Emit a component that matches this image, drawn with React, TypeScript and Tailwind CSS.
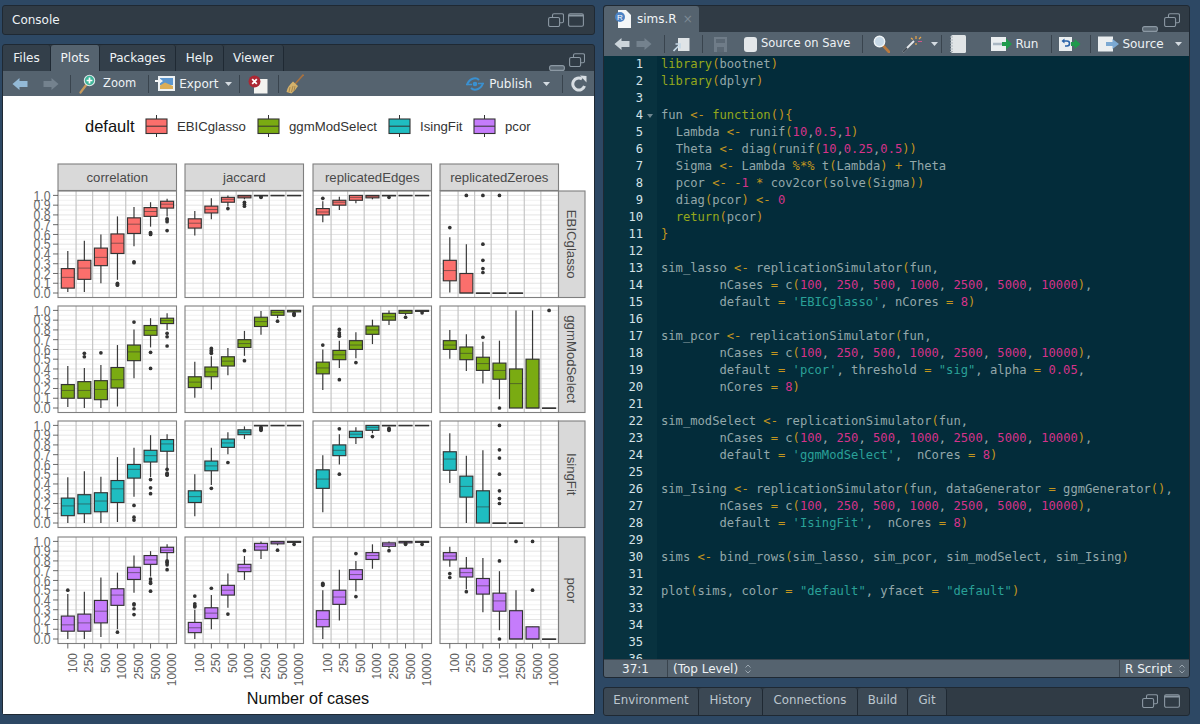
import React from "react";

const UI = "font-['DejaVu_Sans',sans-serif]";

// [lo, q1, med, q3, hi, ...outliers], null = nothing drawn
type Box = number[] | null;
const FLAT1: Box = [1, 1, 1, 1, 1];
const FLAT0: Box = [0, 0, 0, 0, 0];

const DATA: Box[][][] = [
  [
    [
      [0.01, 0.05, 0.16, 0.25, 0.43],
      [0.01, 0.14, 0.255, 0.335, 0.535],
      [0.1, 0.28, 0.365, 0.46, 0.6],
      [0.135, 0.405, 0.51, 0.605, 0.785, 0.1, 0.09, 0.08],
      [0.48, 0.61, 0.705, 0.77, 0.88, 0.32, 0.31],
      [0.68, 0.785, 0.835, 0.875, 0.93, 0.62, 0.61, 0.6],
      [0.785, 0.87, 0.91, 0.94, 0.965, 0.76, 0.75, 0.73, 0.64],
    ],
    [
      [0.59, 0.665, 0.715, 0.76, 0.84],
      [0.755, 0.82, 0.855, 0.89, 0.97],
      [0.885, 0.93, 0.96, 0.98, 1, 0.865],
      [0.96, 0.975, 0.99, 1, 1, 0.93, 0.91, 0.89],
      [0.995, 0.995, 1, 1, 1, 0.985, 0.98],
      FLAT1,
      FLAT1,
    ],
    [
      [0.725, 0.8, 0.83, 0.865, 0.94, 0.97],
      [0.85, 0.9, 0.93, 0.95, 0.985],
      [0.92, 0.95, 0.98, 1, 1],
      [0.96, 0.975, 0.99, 1, 1],
      [0.995, 0.995, 1, 1, 1, 0.98],
      FLAT1,
      FLAT1,
    ],
    [
      [0.005, 0.125, 0.23, 0.335, 0.57, 0.67],
      [0, 0, 0, 0.2, 0.5, 1],
      [0, 0, 0, 0, 0, 1, 0.5, 0.335, 0.25, 0.21],
      [0, 0, 0, 0, 0, 1],
      FLAT0,
      null,
      null,
    ],
  ],
  [
    [
      [0.01, 0.1, 0.18, 0.24, 0.43],
      [0, 0.1, 0.18, 0.27, 0.41, 0.525, 0.56],
      [0, 0.085, 0.19, 0.28, 0.44, 0.565],
      [0.015, 0.205, 0.29, 0.415, 0.645],
      [0.305, 0.485, 0.575, 0.645, 0.805, 0.88],
      [0.62, 0.745, 0.795, 0.845, 0.92, 0.57, 0.405],
      [0.8, 0.865, 0.895, 0.92, 0.97, 0.765, 0.73, 0.635],
    ],
    [
      [0.105, 0.21, 0.265, 0.32, 0.475],
      [0.19, 0.32, 0.37, 0.42, 0.53, 0.61, 0.59, 0.575, 0.56],
      [0.335, 0.43, 0.48, 0.525, 0.615],
      [0.535, 0.62, 0.66, 0.7, 0.79, 0.485],
      [0.75, 0.835, 0.885, 0.93, 0.995],
      [0.92, 0.95, 0.98, 1, 1, 0.89],
      [0.985, 0.985, 1, 1, 1, 0.97, 0.96, 0.95],
    ],
    [
      [0.185, 0.35, 0.41, 0.47, 0.6, 0.645],
      [0.41, 0.495, 0.545, 0.59, 0.69, 0.805, 0.77, 0.75, 0.735, 0.29],
      [0.51, 0.6, 0.645, 0.69, 0.775, 0.465],
      [0.655, 0.755, 0.8, 0.84, 0.905],
      [0.85, 0.9, 0.935, 0.97, 1],
      [0.95, 0.97, 0.99, 1, 1, 0.93],
      [0.99, 0.99, 1, 1, 1, 0.975],
    ],
    [
      [0.505, 0.6, 0.645, 0.69, 0.8],
      [0.38, 0.495, 0.56, 0.625, 0.755],
      [0.25, 0.385, 0.455, 0.52, 0.68, 0.725],
      [0.09, 0.295, 0.385, 0.46, 0.69, 0],
      [0, 0, 0.25, 0.4, 1],
      [0, 0, 0, 0.5, 1],
      [0, 0, 0, 0, 0, 1],
    ],
  ],
  [
    [
      [0, 0.075, 0.175, 0.255, 0.47],
      [0, 0.095, 0.195, 0.29, 0.53],
      [0, 0.115, 0.225, 0.31, 0.475],
      [0.01, 0.21, 0.35, 0.435, 0.675],
      [0.27, 0.46, 0.55, 0.6, 0.77, 0.18, 0.06, 0.03],
      [0.47, 0.625, 0.69, 0.745, 0.9, 0.445, 0.36, 0.3],
      [0.56, 0.735, 0.81, 0.855, 0.91, 0.55, 0.51, 0.5, 0.49],
    ],
    [
      [0.07, 0.21, 0.27, 0.33, 0.5],
      [0.39, 0.535, 0.585, 0.635, 0.77, 0.355],
      [0.705, 0.775, 0.82, 0.86, 0.93, 0.62],
      [0.86, 0.905, 0.93, 0.955, 0.99],
      [0.995, 0.995, 1, 1, 1, 0.98, 0.97, 0.96, 0.95],
      FLAT1,
      FLAT1,
    ],
    [
      [0.11, 0.355, 0.45, 0.545, 0.695],
      [0.6, 0.69, 0.745, 0.8, 0.91, 0.965, 0.5],
      [0.81, 0.875, 0.91, 0.94, 0.98],
      [0.92, 0.95, 0.98, 1, 1, 0.885],
      [0.995, 0.995, 1, 1, 1, 0.97, 0.96, 0.95],
      FLAT1,
      FLAT1,
    ],
    [
      [0.41, 0.54, 0.655, 0.73, 0.92],
      [0, 0.265, 0.375, 0.48, 0.69],
      [0, 0, 0.165, 0.33, 0.745],
      [0, 0, 0, 0, 0, 1, 0.75, 0.665, 0.5, 0.33, 0.25, 0.2],
      FLAT0,
      null,
      null,
    ],
  ],
  [
    [
      [0, 0.08, 0.145, 0.235, 0.46, 0.5],
      [0, 0.08, 0.165, 0.255, 0.485],
      [0.02, 0.165, 0.285, 0.395, 0.63],
      [0.1, 0.345, 0.45, 0.515, 0.68, 0.07],
      [0.475, 0.61, 0.68, 0.735, 0.855, 0.36, 0.35, 0.31, 0.25],
      [0.64, 0.765, 0.81, 0.855, 0.9, 0.615, 0.585, 0.57, 0.49],
      [0.815, 0.885, 0.91, 0.94, 0.97, 0.8, 0.79, 0.78, 0.76, 0.71],
    ],
    [
      [0, 0.065, 0.115, 0.17, 0.3, 0.44, 0.36, 0.34, 0.33],
      [0.1, 0.21, 0.265, 0.32, 0.45, 0.52],
      [0.32, 0.45, 0.5, 0.55, 0.67, 0.255],
      [0.605, 0.69, 0.73, 0.765, 0.85, 0.905],
      [0.82, 0.91, 0.945, 0.98, 1],
      [0.96, 0.975, 0.99, 1, 1, 0.91],
      [0.99, 0.99, 1, 1, 1, 0.97],
    ],
    [
      [0, 0.125, 0.2, 0.29, 0.5, 0.57, 0.56, 0.55],
      [0.19, 0.355, 0.43, 0.5, 0.71],
      [0.49, 0.61, 0.66, 0.71, 0.8, 0.875, 0.435],
      [0.72, 0.815, 0.855, 0.885, 0.97],
      [0.93, 0.95, 0.97, 0.985, 1, 0.905],
      [0.96, 0.985, 0.995, 1, 1, 0.98, 0.97],
      [0.99, 0.99, 1, 1, 1, 0.97],
    ],
    [
      [0.74, 0.81, 0.85, 0.885, 0.945, 0.67, 0.63],
      [0.51, 0.635, 0.68, 0.725, 0.84, 0.485],
      [0.275, 0.46, 0.545, 0.62, 0.83],
      [0.09, 0.285, 0.39, 0.47, 0.695, 0.8, 0],
      [0, 0, 0, 0.29, 0.5, 1],
      [0, 0, 0, 0.125, 0.125, 1, 0.5],
      FLAT0,
    ],
  ],
];

const COL_X = [58, 185, 313, 440];
const ROW_Y = [190, 305, 420, 536];
const PANEL_W = 118.5;
const PANEL_H = 106.5;
const FILLS = ["#fb6f6c", "#7aab12", "#1fbdc1", "#c57cfb"];
const COLS = ["correlation", "jaccard", "replicatedEdges", "replicatedZeroes"];
const ROWS = ["EBICglasso", "ggmModSelect", "IsingFit", "pcor"];
const CASES = ["100", "250", "500", "1000", "2500", "5000", "10000"];
const TICKS = [0, 0.1, 0.2, 0.3, 0.4, 0.5, 0.6, 0.7, 0.8, 0.9, 1];
const ARIAL = "'Liberation Sans', Arial, sans-serif";

function Panel({ r, c }: { r: number; c: number }) {
  const x0 = COL_X[c];
  const y0 = ROW_Y[r];
  const yOf = (v: number) => y0 + 102 - v * 97.6;
  const xOf = (i: number) => x0 + 9.8 + i * 16.55;
  const minor = Array.from({ length: 21 }, (_, i) => i * 0.05);
  return (
    <g>
      {minor.map((v, i) => (
        <line key={i} x1={x0} x2={x0 + PANEL_W} y1={yOf(v)} y2={yOf(v)} stroke={i % 2 ? "#f1f1f1" : "#e4e4e4"} strokeWidth={1} />
      ))}
      {[1, 2, 3, 4, 5, 6].map((i) => (
        <line key={i} x1={xOf(i) - 8.27} x2={xOf(i) - 8.27} y1={y0} y2={y0 + PANEL_H} stroke="#c6c6c6" strokeWidth={1.2} />
      ))}
      {DATA[r][c].map((b, i) => {
        if (!b) return null;
        const [lo, q1, med, q3, hi, ...out] = b;
        const x = xOf(i);
        return (
          <g key={i}>
            <line x1={x} x2={x} y1={yOf(hi)} y2={yOf(lo)} stroke="#3a3a3a" strokeWidth={1.2} />
            <rect x={x - 6.5} y={yOf(q3)} width={13} height={Math.max(yOf(q1) - yOf(q3), 0.4)} fill={FILLS[r]} stroke="#333" strokeWidth={1.15} />
            <line x1={x - 6.5} x2={x + 6.5} y1={yOf(med)} y2={yOf(med)} stroke="#333" strokeOpacity={0.55} strokeWidth={1} />
            {out.map((o, k) => (
              <circle key={k} cx={x} cy={yOf(o)} r={1.85} fill="#333" />
            ))}
          </g>
        );
      })}
      <rect x={x0} y={y0} width={PANEL_W} height={PANEL_H} fill="none" stroke="#7f7f7f" strokeWidth={1.1} />
      {c === 0 &&
        TICKS.map((v) => (
          <g key={v}>
            <line x1={x0 - 5} x2={x0} y1={yOf(v)} y2={yOf(v)} stroke="#444" strokeWidth={0.8} />
            <text
              transform={`translate(${x0 - 7.5} ${yOf(v) + 5.2}) scale(0.88 1)`}
              textAnchor="end"
              fontSize={14}
              fill="#6a6a6a"
              fontFamily={ARIAL}
            >
              {v.toFixed(1)}
            </text>
          </g>
        ))}
      {r === 3 &&
        CASES.map((t, i) => (
          <g key={t}>
            <line x1={xOf(i)} x2={xOf(i)} y1={y0 + PANEL_H} y2={y0 + PANEL_H + 5} stroke="#444" strokeWidth={0.8} />
            <text
              transform={`translate(${xOf(i) + 9} ${y0 + PANEL_H + 9.5}) rotate(-90) scale(0.92 1)`}
              textAnchor="end"
              fontSize={13}
              fill="#5f5f5f"
              fontFamily={ARIAL}
            >
              {t}
            </text>
          </g>
        ))}
    </g>
  );
}

function LegendKey({ x, fill, label, tx }: { x: number; fill: string; label: string; tx: number }) {
  return (
    <g>
      <line x1={x + 10.5} x2={x + 10.5} y1={114} y2={136} stroke="#333" strokeWidth={1} />
      <rect x={x} y={118} width={21} height={14.5} fill={fill} stroke="#333" strokeWidth={1.1} />
      <line x1={x} x2={x + 21} y1={125.2} y2={125.2} stroke="#333" strokeWidth={1} />
      <text x={tx} y={129.5} fontSize={13.2} fill="#333" fontFamily={ARIAL}>
        {label}
      </text>
    </g>
  );
}

function Chart() {
  return (
    <svg width={591} height={620} viewBox="3 95 591 620" className="block">
      <text x={85} y={131} fontSize={16.5} fill="#111" fontFamily={ARIAL}>
        default
      </text>
      <LegendKey x={146} fill={FILLS[0]} label="EBICglasso" tx={177} />
      <LegendKey x={258} fill={FILLS[1]} label="ggmModSelect" tx={289} />
      <LegendKey x={389} fill={FILLS[2]} label="IsingFit" tx={420} />
      <LegendKey x={474} fill={FILLS[3]} label="pcor" tx={505} />
      {COLS.map((name, c) => (
        <g key={name}>
          <rect x={COL_X[c]} y={163} width={PANEL_W} height={26.5} fill="#d9d9d9" stroke="#7f7f7f" strokeWidth={1.1} />
          <text x={COL_X[c] + PANEL_W / 2} y={180.5} textAnchor="middle" fontSize={13.2} fill="#4a4a4a" fontFamily={ARIAL}>
            {name}
          </text>
        </g>
      ))}
      {ROWS.map((name, r) => (
        <g key={name}>
          <rect x={558.5} y={ROW_Y[r]} width={26.5} height={PANEL_H} fill="#d9d9d9" stroke="#7f7f7f" strokeWidth={1.1} />
          <text
            transform={`translate(567 ${ROW_Y[r] + PANEL_H / 2}) rotate(90)`}
            textAnchor="middle"
            fontSize={13.2}
            fill="#4a4a4a"
            fontFamily={ARIAL}
          >
            {name}
          </text>
        </g>
      ))}
      {ROWS.map((_, r) => COLS.map((_, c) => <Panel key={`${r}-${c}`} r={r} c={c} />))}
      <text x={308} y={703} textAnchor="middle" fontSize={16.2} fill="#111" fontFamily={ARIAL}>
        Number of cases
      </text>
    </svg>
  );
}

/* ---------- toolbar icons ---------- */

function ArrowLeft({ color = "#93b9d6" }: { color?: string }) {
  return (
    <svg width="16" height="14" viewBox="0 0 16 14" className="shrink-0">
      <path d="M0.5 7 L7.5 1 V4 H15.5 V10 H7.5 V13 Z" fill={color} />
    </svg>
  );
}

function ArrowRight() {
  return (
    <svg width="16" height="14" viewBox="0 0 16 14" className="shrink-0">
      <path d="M15.5 7 L8.5 1 V4 H0.5 V10 H8.5 V13 Z" fill="#74828e" />
    </svg>
  );
}

function Sep({ ml = 0 }: { ml?: number }) {
  return <span className="h-[18px] w-px shrink-0 bg-[#39444e]" style={{ marginLeft: ml }} />;
}

function Caret({ ml = 0 }: { ml?: number }) {
  return (
    <svg width="7" height="4" viewBox="0 0 7 4" className="shrink-0" style={{ marginLeft: ml }}>
      <path d="M0 0 H7 L3.5 4 Z" fill="#d5dce2" />
    </svg>
  );
}

function Stepper() {
  return (
    <svg width="6" height="10" viewBox="0 0 6 10" className="ml-[7px] shrink-0">
      <path d="M0.5 3.5 L3 1 L5.5 3.5 M0.5 6.5 L3 9 L5.5 6.5" fill="none" stroke="#9aa6b0" strokeWidth="1" />
    </svg>
  );
}

function ZoomIcon() {
  return (
    <svg width="17" height="20" viewBox="0 0 17 20" className="shrink-0">
      <line x1="1.5" y1="18.5" x2="7.5" y2="10.5" stroke="#c79a5c" strokeWidth="2.2" strokeLinecap="round" />
      <circle cx="10.5" cy="6.5" r="5.2" fill="#3fb59a" stroke="#dfe8ea" strokeWidth="1.1" />
      <path d="M10.5 3.6 V9.4 M7.6 6.5 H13.4" stroke="#fff" strokeWidth="1.7" />
    </svg>
  );
}

function ExportIcon() {
  return (
    <svg width="20" height="18" viewBox="0 0 20 18" className="shrink-0">
      <rect x="3" y="1" width="17" height="15" fill="#eef2f4" />
      <rect x="5" y="3" width="13" height="7" fill="#5d97cf" />
      <path d="M5 14 V10.5 L10 7.5 L18 11 V14 Z" fill="#dcae57" />
      <path d="M0 5 H3.5 V2.5 L8 6 L3.5 9.5 V7 H0 Z" fill="#f4f6f7" />
    </svg>
  );
}

function RemoveIcon() {
  return (
    <svg width="20" height="20" viewBox="0 0 20 20" className="shrink-0">
      <path d="M6 5 H19.5 V19.5 H6 Z" fill="#f3f3f0" />
      <circle cx="6.5" cy="7.5" r="6" fill="#ad2733" />
      <path d="M4.2 5.2 L8.8 9.8 M8.8 5.2 L4.2 9.8" stroke="#fff" strokeWidth="1.8" />
    </svg>
  );
}

function BroomIcon() {
  return (
    <svg width="18" height="20" viewBox="0 0 18 20" className="shrink-0">
      <line x1="17.5" y1="0.5" x2="9" y2="10" stroke="#a8713e" strokeWidth="1.6" />
      <path d="M7 7.5 L12 12 Q9 17 5.5 19.5 L0.5 18 Q1 13 7 7.5 Z" fill="#d5b26b" />
      <path d="M4 13 L3 18 M7 12 L5.5 18 M9 12 L8 17" stroke="#9a7b45" strokeWidth="0.8" />
    </svg>
  );
}

function PublishIcon() {
  return (
    <svg width="18" height="14" viewBox="0 0 18 14" fill="none" className="shrink-0">
      <path d="M1 8 C2 5 3.5 3 6 2 C9 0.8 11.5 1.5 13 3" stroke="#3a90d0" strokeWidth="2" />
      <path d="M17 6 C16 9 14.5 11 12 12 C9 13.2 6.5 12.5 5 11" stroke="#3a90d0" strokeWidth="2" />
      <circle cx="9" cy="7" r="2.3" fill="#3a90d0" />
      <path d="M0 7.5 H6 M12 6.5 H18" stroke="#3a90d0" strokeWidth="1.4" />
    </svg>
  );
}

function RefreshIcon() {
  return (
    <svg width="16" height="17" viewBox="0 0 16 17" fill="none" className="shrink-0">
      <path d="M13.5 11 A6 6 0 1 1 11 4" stroke="#d7dde2" strokeWidth="3" />
      <path d="M9 0.5 L15.5 1 V7.5 Z" fill="#d7dde2" />
    </svg>
  );
}

function ShowIcon() {
  return (
    <svg width="17" height="15" viewBox="0 0 17 15" className="shrink-0">
      <path d="M5 1 H16.5 V14 H5 Z" fill="#dfe4e7" />
      <path d="M0.5 14 L5.5 9 M2.5 7 H7 V11.5" stroke="#c5d8e6" strokeWidth="1.7" fill="none" />
    </svg>
  );
}

function SaveIcon() {
  return (
    <svg width="13" height="15" viewBox="0 0 13 15" className="shrink-0">
      <path d="M0 0 H13 V15 H0 Z" fill="#6f7c88" />
      <rect x="2" y="2" width="9" height="4" fill="#5b6874" />
      <rect x="3" y="10" width="7" height="5" fill="#5b6874" />
    </svg>
  );
}

function SearchIcon() {
  return (
    <svg width="17" height="18" viewBox="0 0 17 18" className="shrink-0">
      <line x1="10.5" y1="11" x2="16" y2="17" stroke="#b97a3e" strokeWidth="2.6" strokeLinecap="round" />
      <circle cx="6.5" cy="6.5" r="5.2" fill="#c6d8e6" stroke="#eef3f6" strokeWidth="1.4" />
    </svg>
  );
}

function WandIcon() {
  return (
    <svg width="20" height="18" viewBox="0 0 20 18" className="shrink-0">
      <line x1="1" y1="17" x2="12" y2="6" stroke="#e6e9ec" strokeWidth="1.8" />
      <line x1="1" y1="17" x2="5" y2="13" stroke="#3f4a54" strokeWidth="1.8" />
      <path d="M14 1 V4 M14 8 V10 M9 3 L11 4.5 M17 4 L19 2" stroke="#e9a548" strokeWidth="1.2" />
      <path d="M16 6.5 H20" stroke="#d6538c" strokeWidth="1.2" />
    </svg>
  );
}

function NotebookIcon() {
  return (
    <svg width="16" height="18" viewBox="0 0 16 18" className="shrink-0">
      <rect x="1" y="0" width="15" height="18" rx="1.5" fill="#e0e4e6" />
      <path d="M0 2 H3 M0 5 H3 M0 8 H3 M0 11 H3 M0 14 H3 M0 16.5 H3" stroke="#aab3ba" strokeWidth="1" />
    </svg>
  );
}

function RunIcon() {
  return (
    <svg width="22" height="16" viewBox="0 0 22 16" className="shrink-0">
      <rect x="0" y="1" width="15" height="14" fill="#eaeef0" />
      <path d="M2 8 H12" stroke="#a9b7c3" strokeWidth="2.4" />
      <path d="M11 6 H15 V2.5 L21 8 L15 13.5 V10 H11 Z" fill="#1f9a4c" />
    </svg>
  );
}

function RerunIcon() {
  return (
    <svg width="22" height="16" viewBox="0 0 22 16" fill="none" className="shrink-0">
      <rect x="0" y="1" width="13" height="14" fill="#eaeef0" />
      <path d="M5 5 H8 A2.5 2.5 0 0 1 8 10 H6" stroke="#2a63a8" strokeWidth="1.6" />
      <path d="M2.5 5 L5.5 2.5 V7.5 Z" fill="#2a63a8" />
      <path d="M12 6 H15.5 V3 L21.5 8 L15.5 13 V10 H12 Z" fill="#1f9a4c" />
    </svg>
  );
}

function SourceIcon() {
  return (
    <svg width="22" height="16" viewBox="0 0 22 16" className="shrink-0">
      <rect x="0" y="0.5" width="15" height="15" fill="#eaeef0" />
      <path d="M8 6 H14.5 V3 L21 8 L14.5 13 V10 H8 Z" fill="#7ba9d3" />
    </svg>
  );
}

function FileRIcon() {
  return (
    <svg width="16" height="18" viewBox="0 0 16 18" className="shrink-0">
      <path d="M3 0 H11 L16 5 V18 H3 Z" fill="#f4f6f7" />
      <circle cx="5" cy="7" r="5" fill="#4d83c4" />
      <text x="5" y="10" textAnchor="middle" fontSize="8" fill="#fff" fontFamily="'Liberation Sans', sans-serif">
        R
      </text>
    </svg>
  );
}

function StackIcon() {
  return (
    <svg width="16" height="14" viewBox="0 0 16 14" fill="none" className="shrink-0">
      <rect x="4.5" y="0.7" width="11" height="9" rx="1.5" stroke="#8b98a3" strokeWidth="1.1" />
      <rect x="0.6" y="4.5" width="11" height="9" rx="1.5" fill="#303b45" stroke="#8b98a3" strokeWidth="1.1" />
    </svg>
  );
}

function MaxIcon() {
  return (
    <svg width="16" height="14" viewBox="0 0 16 14" fill="none" className="shrink-0">
      <rect x="0.6" y="0.7" width="14.8" height="12.6" rx="1.5" stroke="#8b98a3" strokeWidth="1.1" />
      <path d="M1 2.5 H15" stroke="#8b98a3" strokeWidth="2" />
    </svg>
  );
}

function MinIcon() {
  return (
    <svg width="16" height="6" viewBox="0 0 16 6" fill="none" className="shrink-0 self-end">
      <rect x="0.6" y="0.6" width="14.8" height="4.8" rx="2" fill="#5b6873" stroke="#8b98a3" strokeWidth="1.1" />
    </svg>
  );
}

/* ---------- panes ---------- */

function Tab({ label, w, active, dim }: { label: string; w: number; active?: boolean; dim?: boolean }) {
  return (
    <div
      className={`flex h-full shrink-0 items-center justify-center rounded-t-[3px] border-r border-[#1f2933] ${
        active
          ? "bg-[#55636f] text-[12px] text-[#f2f5f7]"
          : dim
            ? "bg-[#3b4854] pb-[2px] text-[11.8px] text-[#bcc6ce]"
            : "bg-[#333f4a] text-[12px] text-[#eef2f5]"
      }`}
      style={{ width: w }}
    >
      {label}
    </div>
  );
}

const KEYWORDS = new Set(["library", "function", "return"]);

function CodeLine({ text }: { text: string }) {
  const parts = text.match(/'[^']*'|"[^"]*"|\d+\.?\d*|[A-Za-z_][A-Za-z0-9_]*|<-|%\*%|[(){}=*+\-]|,|\s+|./g) ?? [];
  return (
    <>
      {parts.map((p, i) => {
        let cls = "text-[#93a8aa]";
        if (/^['"]/.test(p)) cls = "text-[#2aa198]";
        else if (/^\d/.test(p)) cls = "text-[#d6338a]";
        else if (KEYWORDS.has(p)) cls = "text-[#94a81c]";
        else if (/^(<-|%\*%|[(){}=*+\-])$/.test(p)) cls = "text-[#c2951f]";
        return (
          <span key={i} className={cls}>
            {p}
          </span>
        );
      })}
    </>
  );
}

const CASES_LINE = "        nCases = c(100, 250, 500, 1000, 2500, 5000, 10000),";
const CODE = [
  "library(bootnet)",
  "library(dplyr)",
  "",
  "fun <- function(){",
  "  Lambda <- runif(10,0.5,1)",
  "  Theta <- diag(runif(10,0.25,0.5))",
  "  Sigma <- Lambda %*% t(Lambda) + Theta",
  "  pcor <- -1 * cov2cor(solve(Sigma))",
  "  diag(pcor) <- 0",
  "  return(pcor)",
  "}",
  "",
  "sim_lasso <- replicationSimulator(fun,",
  CASES_LINE,
  "        default = 'EBICglasso', nCores = 8)",
  "",
  "sim_pcor <- replicationSimulator(fun,",
  CASES_LINE,
  "        default = 'pcor', threshold = \"sig\", alpha = 0.05,",
  "        nCores = 8)",
  "",
  "sim_modSelect <- replicationSimulator(fun,",
  CASES_LINE,
  "        default = 'ggmModSelect',  nCores = 8)",
  "",
  "sim_Ising <- replicationSimulator(fun, dataGenerator = ggmGenerator(),",
  CASES_LINE,
  "        default = 'IsingFit',  nCores = 8)",
  "",
  "sims <- bind_rows(sim_lasso, sim_pcor, sim_modSelect, sim_Ising)",
  "",
  "plot(sims, color = \"default\", yfacet = \"default\")",
  "",
  "",
  "",
  "",
];

export default function App() {
  return (
    <div className={`flex h-[724px] w-[1200px] gap-[8px] overflow-hidden bg-[#2d4864] pt-[5px] pl-[2px] ${UI}`}>
      {/* left column */}
      <div className="flex w-[593px] flex-col gap-[9px]">
        <div className="flex h-[30px] items-center rounded-[3px] border border-[#1f2933] bg-[#303b45] pr-[10px] pl-[9px] text-[12px] text-[#eef2f5]">
          <span>Console</span>
          <div className="ml-auto flex items-center gap-[4px]">
            <StackIcon />
            <MaxIcon />
          </div>
        </div>

        <div className="flex h-[671px] flex-col rounded-[3px] border border-[#1f2933] bg-[#303b45]">
          <div className="flex h-[26px] shrink-0 items-stretch pr-[9px]">
            <Tab label="Files" w={48} />
            <Tab label="Plots" w={49} active />
            <Tab label="Packages" w={76} />
            <Tab label="Help" w={48} />
            <Tab label="Viewer" w={60} />
            <div className="ml-auto flex items-center gap-[4px] pt-[4px]">
              <MinIcon />
              <StackIcon />
            </div>
          </div>
          <div className="flex h-[25px] shrink-0 items-center bg-[#55636f] text-[12px] text-[#eef2f5]">
            <span className="ml-[9px]" />
            <ArrowLeft />
            <span className="ml-[15px]" />
            <ArrowRight />
            <Sep ml={11} />
            <span className="ml-[8px]" />
            <ZoomIcon />
            <span className="ml-[7px] text-[11.5px]">Zoom</span>
            <Sep ml={12} />
            <span className="ml-[6px]" />
            <ExportIcon />
            <span className="ml-[4px]">Export</span>
            <Caret ml={7} />
            <Sep ml={7} />
            <span className="ml-[8px]" />
            <RemoveIcon />
            <Sep ml={10} />
            <span className="ml-[7px]" />
            <BroomIcon />
            <div className="ml-auto flex items-center">
              <PublishIcon />
              <span className="ml-[5px]">Publish</span>
              <Caret ml={11} />
              <Sep ml={12} />
              <span className="ml-[8px]" />
              <RefreshIcon />
              <span className="ml-[7px]" />
            </div>
          </div>
          <div className="min-h-0 flex-1 overflow-hidden bg-white">
            <Chart />
          </div>
        </div>
      </div>

      {/* right column */}
      <div className="flex w-[587px] flex-col gap-[9px]">
        <div className="flex h-[673px] flex-col overflow-hidden rounded-[3px] border border-[#1f2933] bg-[#303b45]">
          <div className="flex h-[26px] shrink-0 items-stretch pr-[9px]">
            <div className="flex w-[95px] items-center rounded-t-[3px] bg-[#55636f] pl-[11px] text-[12px] text-[#f2f5f7]">
              <FileRIcon />
              <span className="ml-[6px]">sims.R</span>
              <span className="ml-[6px] text-[12px] text-[#7d8a95]">×</span>
            </div>
            <div className="ml-auto flex items-center gap-[6px] pt-[2px]">
              <MinIcon />
              <StackIcon />
            </div>
          </div>
          <div className="flex h-[24px] shrink-0 items-center bg-[#55636f] text-[12px] text-[#eef2f5]">
            <span className="ml-[10px]" />
            <ArrowLeft color="#ccd5db" />
            <span className="ml-[6px]" />
            <ArrowRight />
            <Sep ml={12} />
            <span className="ml-[8px]" />
            <ShowIcon />
            <Sep ml={12} />
            <span className="ml-[11px]" />
            <SaveIcon />
            <span className="ml-[17px] h-[15px] w-[13px] shrink-0 rounded-[3px] bg-[#e3e7ea]" />
            <span className="ml-[4px] text-[11.5px]">Source on Save</span>
            <Sep ml={12} />
            <span className="ml-[10px]" />
            <SearchIcon />
            <span className="ml-[12px]" />
            <WandIcon />
            <Caret ml={9} />
            <Sep ml={3} />
            <span className="ml-[8px]" />
            <NotebookIcon />
            <span className="ml-[25px]" />
            <RunIcon />
            <span className="ml-[2px]">Run</span>
            <Sep ml={13} />
            <span className="ml-[7px]" />
            <RerunIcon />
            <Sep ml={9} />
            <span className="ml-[7px]" />
            <SourceIcon />
            <span className="ml-[2px]">Source</span>
            <Caret ml={11} />
          </div>
          <div className="flex min-h-0 flex-1 overflow-hidden bg-[#032c3a] font-['DejaVu_Sans_Mono',monospace] text-[12.15px] leading-[17px]">
            <div className="w-[53px] shrink-0 bg-[#08323f] pr-[14px] text-right text-[#d5e3e8]">
              {CODE.map((_, i) => (
                <div key={i} className="relative h-[17px]">
                  {i + 1}
                  {i === 3 && (
                    <svg width="6" height="4" viewBox="0 0 6 4" className="absolute top-[7px] right-[-10px]">
                      <path d="M0 0 H6 L3 4 Z" fill="#6f8790" />
                    </svg>
                  )}
                </div>
              ))}
            </div>
            <div className="pl-[4px] whitespace-pre">
              {CODE.map((line, i) => (
                <div key={i} className="h-[17px]">
                  <CodeLine text={line} />
                </div>
              ))}
            </div>
          </div>
          <div className="flex h-[18px] shrink-0 items-stretch border-t border-[#39444e] bg-[#55636f] text-[12px] text-[#eef2f5]">
            <div className="flex w-[64px] items-center justify-center border-r border-[#39444e]">37:1</div>
            <div className="flex flex-1 items-center pl-[5px]">
              (Top Level)
              <Stepper />
            </div>
            <div className="flex w-[70px] items-center border-l border-[#39444e] pl-[5px]">
              R Script
              <Stepper />
            </div>
          </div>
        </div>

        <div className="flex h-[29px] items-stretch overflow-hidden rounded-[3px] border border-[#1f2933] bg-[#303b45] pr-[9px]">
          <Tab label="Environment" w={95} dim />
          <Tab label="History" w={64} dim />
          <Tab label="Connections" w={95} dim />
          <Tab label="Build" w={50} dim />
          <Tab label="Git" w={39} dim />
          <div className="ml-auto flex items-center gap-[6px] pb-[2px]">
            <StackIcon />
            <MaxIcon />
          </div>
        </div>
      </div>
    </div>
  );
}
